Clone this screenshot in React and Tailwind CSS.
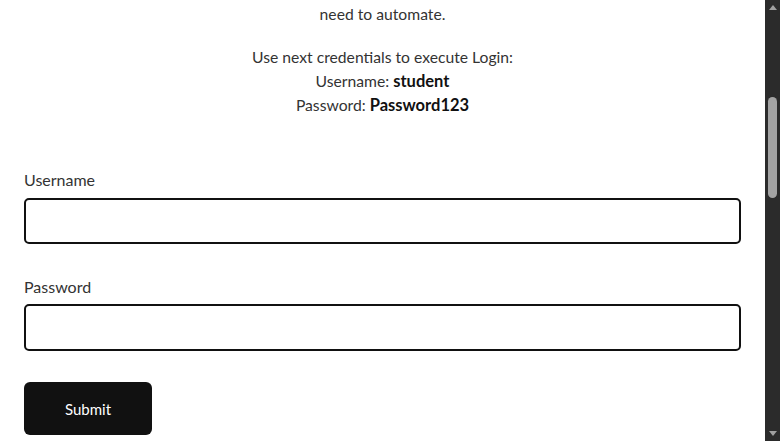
export default function App() {
  return (
    <div className="flex h-[441px] w-[780px] overflow-hidden bg-white" style={{ fontFamily: "Lato, 'Open Sans', sans-serif" }}>
      <div className="flex w-[765px] flex-col px-6 text-[16px] leading-6 text-[#333]">
        <p className="mt-[2px] text-center text-[15.7px]">need to automate.</p>
        <div className="mt-[19px] text-center text-[15.7px]">
          <p>Use next credentials to execute Login:</p>
          <p>Username: <b className="text-[16.5px] font-bold text-[#111]">student</b></p>
          <p>Password: <b className="text-[16.5px] font-bold text-[#111]">Password123</b></p>
        </div>
        <label className="mt-[51px] block">Username</label>
        <input className="mt-[6px] h-[46px] w-full rounded-[5px] border-2 border-[#111] outline-none" />
        <label className="mt-[31px] block">Password</label>
        <input type="password" className="mt-[5px] h-[47px] w-full rounded-[5px] border-2 border-[#111] outline-none" />
        <button className="mt-[31px] h-[53px] w-[128px] rounded-[6px] bg-[#111] text-[15px] text-white">Submit</button>
      </div>
      <div className="relative w-[15px] bg-[#2b2b2b]">
        <div className="absolute left-[4px] top-[5px] h-0 w-0 border-x-[4px] border-b-[5px] border-x-transparent border-b-[#a0a0a0]" />
        <div className="absolute left-[3px] top-[97px] h-[101px] w-[9px] rounded-full bg-[#a3a3a3]" />
        <div className="absolute bottom-[5px] left-[4px] h-0 w-0 border-x-[4px] border-t-[5px] border-x-transparent border-t-[#a0a0a0]" />
      </div>
    </div>
  );
}
